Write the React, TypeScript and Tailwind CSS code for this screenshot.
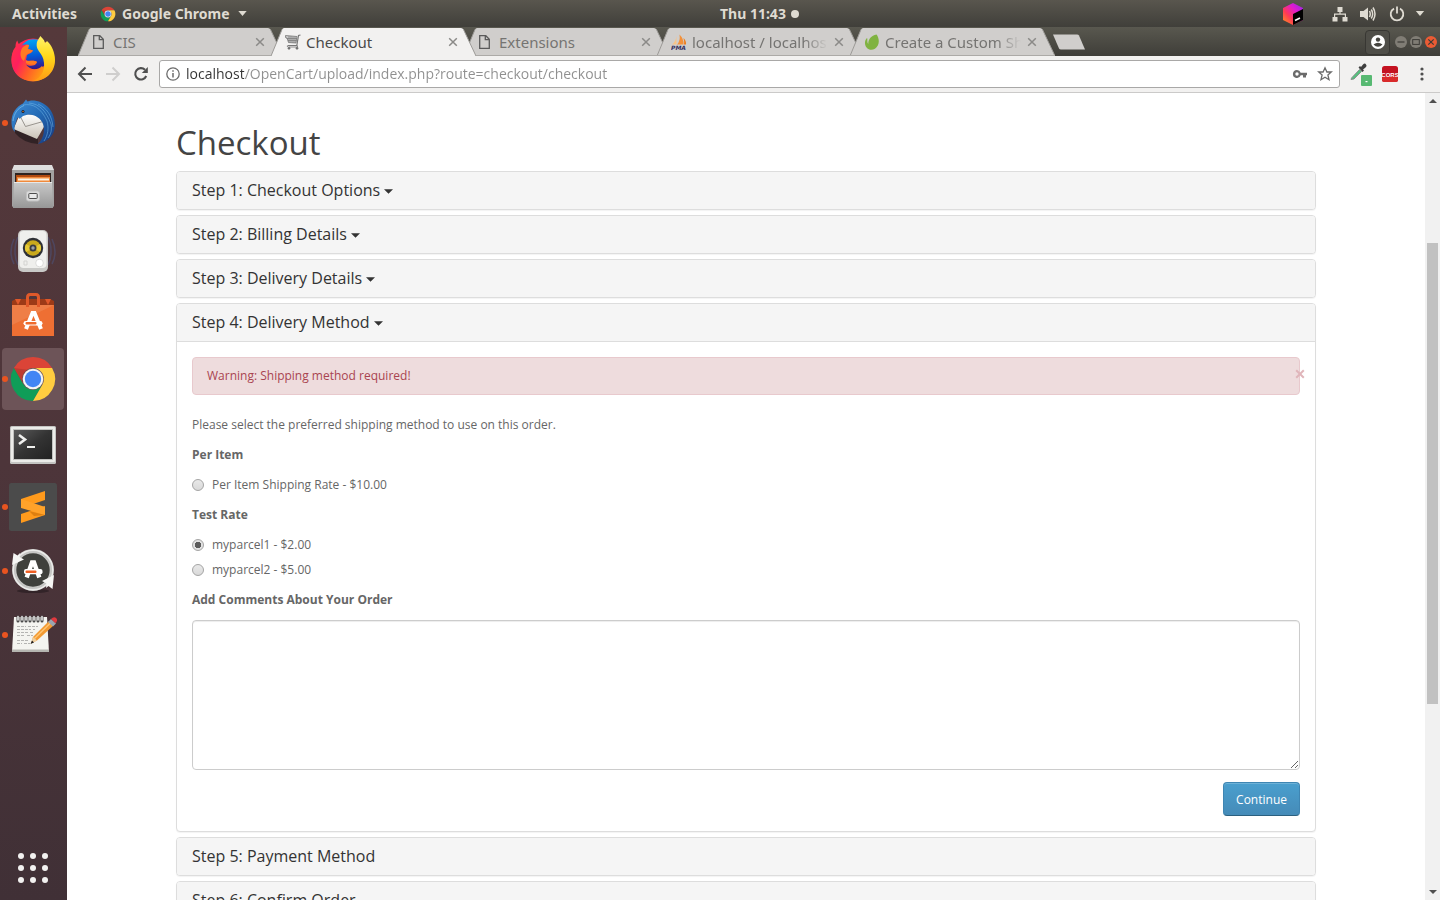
import React, { useState } from "react";

function ChromeLogo({ className }: { className: string }) {
  return (
    <svg viewBox="0 0 48 48" className={className} aria-hidden="true">
      <path d="M4.9 13A22 22 0 0 1 43.1 13H24A11 11 0 0 0 14.5 29.5Z" fill="#db4437" />
      <path d="M4.9 13L14.5 29.5A11 11 0 0 0 33.5 29.5L24 46A22 22 0 0 1 4.9 13Z" fill="#0f9d58" />
      <path d="M43.1 13H24A11 11 0 0 1 33.5 29.5L24 46A22 22 0 0 0 43.1 13Z" fill="#ffcd40" />
      <path d="M4.9 13L14.5 29.5L14 24L20 15Z" fill="#8c2f26" opacity=".35" />
      <circle cx="24" cy="24" r="10.3" fill="#f4f4f4" />
      <circle cx="24" cy="24" r="8.2" fill="#4285f4" />
    </svg>
  );
}

const icon = "size-12";

function Firefox() {
  return (
    <svg viewBox="0 0 48 48" className={icon} aria-hidden="true">
      <defs>
        <linearGradient id="ffBody" x1="0" y1="0.2" x2="1" y2="0.8">
          <stop offset="0" stopColor="#ff2f4a" />
          <stop offset=".3" stopColor="#ff1f5e" />
          <stop offset=".6" stopColor="#ff5a2a" />
          <stop offset="1" stopColor="#ffa210" />
        </linearGradient>
        <linearGradient id="ffFlame" x1="0" y1="0" x2="0" y2="1">
          <stop offset="0" stopColor="#fff36b" />
          <stop offset=".45" stopColor="#ffd91a" />
          <stop offset="1" stopColor="#ff9a14" />
        </linearGradient>
        <linearGradient id="ffGlobe" x1=".4" y1="0" x2=".5" y2="1">
          <stop offset="0" stopColor="#00a4f5" />
          <stop offset=".55" stopColor="#0459d6" />
          <stop offset="1" stopColor="#3a1282" />
        </linearGradient>
      </defs>
      <circle cx="24" cy="25" r="21.5" fill="url(#ffBody)" />
      <circle cx="25" cy="19.5" r="15.2" fill="url(#ffGlobe)" />
      <path d="M8.3 5.5C9 8 10 10 12 11C15 9 18 9.2 20 10L19 14L24 15.500C23 18 20 18.500 18 20L17 25C21 27 24 24.500 28 27C27 31 21 32 17 29.500C21 35 28 36 33 31C39 37 34 43 24 46C10 46 2 36 2.500 24C3 18 4 15 6.500 12C6.500 9 7 7 8.300 5.500Z" fill="url(#ffBody)" />
      <path d="M14 12C17 9.500 19 9.500 20 10.200L19 14L24 15.500C22 18.500 19 18 17 20.500L15 26C10 23 11 15 14 12ZM17 25.500C21 27 24 24.500 28 27C26 30 20 30 17 28Z" fill="#ff7a22" />
      <path d="M31.300 1C33 3 35.500 4.500 36 8C37 7 38 6 38 6C43 10 46 18 46 25C46 38 36 46 24 46C33 43 37 34 34.300 24C32 17 27 15 27.700 9C28 5 30 4 31.300 1Z" fill="url(#ffFlame)" />
    </svg>
  );
}

function Thunderbird() {
  return (
    <svg viewBox="0 0 48 48" className={icon} aria-hidden="true">
      <defs>
        <linearGradient id="tbWing" x1="0" y1="0" x2="1" y2="1">
          <stop offset="0" stopColor="#3f8fd8" />
          <stop offset=".5" stopColor="#2369b4" />
          <stop offset="1" stopColor="#16357a" />
        </linearGradient>
        <linearGradient id="tbMail" x1="0" y1="0" x2="0" y2="1">
          <stop offset="0" stopColor="#ffffff" />
          <stop offset="1" stopColor="#c9c2b6" />
        </linearGradient>
      </defs>
      <path d="M6 30L29 39L29 45Q14 44 6 34Z" fill="#1b1418" opacity=".6" />
      <path d="M11 15L33 16L36 26L28 40L4.500 30Z" fill="url(#tbMail)" />
      <path d="M11 17L16.500 27.500L34 22.500" stroke="#8f8a84" strokeWidth=".9" fill="none" />
      <path d="M2.500 24C2 14 8 7 14 4.500L17 .5L18.500 2.500L22 1.500C36 1 46 12 46 26C46 36 39 43 29 45C35 39 36 31 34 25C32 19 25 15 19 15.500L14 17L10.500 20C9.500 17 8 19 7 23C5.500 27 5 29 6 33C3.500 31 2.700 28 2.500 24Z" fill="url(#tbWing)" />
      <path d="M14 6C24 4 32 9 38 22M20 4C31 5 37 12 42 25M29 5C38 9 43 17 44 28M38 22C40 29 39 36 35 42M42 25C43 31 42 35 39 39" stroke="#6fb6e6" strokeWidth=".9" fill="none" opacity=".6" />
      <path d="M4 22C5 14 9 9 15 6.500" stroke="#7cc0ea" strokeWidth="1" fill="none" opacity=".7" />
      <circle cx="14" cy="12.500" r="1.500" fill="#101c30" />
      <circle cx="14" cy="12.500" r=".7" fill="#e8802a" />
    </svg>
  );
}

function Files() {
  return (
    <svg viewBox="0 0 48 48" className={icon} aria-hidden="true">
      <defs>
        <linearGradient id="fiFront" x1="0" y1="0" x2="0" y2="1">
          <stop offset="0" stopColor="#c9c9c9" />
          <stop offset="1" stopColor="#979797" />
        </linearGradient>
      </defs>
      <rect x="3" y="6" width="42" height="38" rx="1.500" fill="#a2a2a2" />
      <path d="M5 2H43L45 7H3Z" fill="#dedede" />
      <rect x="6" y="10" width="36" height="10" fill="#2e2320" />
      <rect x="7" y="12" width="34" height="8" fill="#b04a10" />
      <rect x="8" y="14" width="33" height="6" fill="#f08a3c" />
      <rect x="9" y="15.500" width="31" height="2" fill="#fdf4e3" />
      <path d="M5 19H43L44 45H4Z" fill="url(#fiFront)" />
      <path d="M5 19.500H43" stroke="#e8e8e8" />
      <rect x="17.500" y="28" width="13" height="10" rx="2" fill="#dcdcdc" stroke="#c2c2c2" />
      <rect x="19.800" y="30.500" width="8.400" height="5" rx=".6" fill="#e9e9e9" stroke="#4c4c4c" />
    </svg>
  );
}

function Rhythmbox() {
  return (
    <svg viewBox="0 0 48 48" className={icon} aria-hidden="true">
      <path d="M5 12C1 20 1 30 5 37M9 10C5 18 5 30 9 38M43 12C47 20 47 30 43 37M39 10C43 18 43 30 39 38" stroke="#4b5582" strokeWidth="1.600" fill="none" opacity=".5" />
      <rect x="9" y="3" width="30" height="42" rx="5" fill="#c9c9c7" />
      <rect x="10.500" y="4" width="27" height="37" rx="4" fill="#efefed" />
      <circle cx="24" cy="21" r="10.200" fill="#2f3136" />
      <circle cx="24" cy="21" r="7.800" fill="#c9a91c" />
      <path d="M24 21L17 17A8 8 0 0 0 17 25ZM24 21L31 17A8 8 0 0 1 31 25Z" fill="#e6c936" />
      <circle cx="24" cy="21" r="3.500" fill="#3a3c40" />
      <circle cx="24" cy="21" r="1.700" fill="#9aa0a8" />
      <circle cx="30.500" cy="36" r="3.800" fill="#fff" stroke="#d0d0ce" strokeWidth=".7" />
      <path d="M15 34H18V38H15Z" stroke="#d3d3d1" fill="none" />
    </svg>
  );
}

function Software() {
  return (
    <svg viewBox="0 0 48 48" className={icon} aria-hidden="true">
      <path d="M3 10L7 8H41L45 10V16H3Z" fill="#9d3a17" />
      <path d="M6 8L9 14L12 8ZM36 8L39 14L42 8Z" fill="#e0582a" />
      <rect x="3" y="14" width="42" height="31" fill="#ee6f33" />
      <path d="M3 14H45L3 34Z" fill="#f08550" opacity=".7" />
      <path d="M18.500 16V6.500Q18.500 3.500 21 3.500H27Q29.500 3.500 29.500 6.500V16" stroke="#e0592a" strokeWidth="3" fill="none" />
      <path d="M17 38L23.500 22H25.500L32 38" stroke="#fff" strokeWidth="4" fill="none" />
      <rect x="14.500" y="30" width="19" height="4.600" rx="2.300" fill="#fff" />
      <rect x="16.500" y="31" width="11" height="2.500" rx="1" fill="#ef6a2c" />
    </svg>
  );
}

function Terminal() {
  return (
    <svg viewBox="0 0 48 48" className={icon} aria-hidden="true">
      <defs>
        <linearGradient id="teScreen" x1="0" y1="0" x2="1" y2="1">
          <stop offset="0" stopColor="#5a5a5a" />
          <stop offset=".5" stopColor="#333333" />
          <stop offset="1" stopColor="#222222" />
        </linearGradient>
      </defs>
      <rect x="1" y="7" width="46" height="38" rx="1.500" fill="#c4c4c2" />
      <rect x="2" y="8" width="44" height="35" rx="1" fill="#ecece9" />
      <rect x="4" y="10" width="40" height="31" fill="#c2c2c0" />
      <rect x="5" y="11" width="38" height="29" fill="url(#teScreen)" />
      <path d="M10 16L16 20.500L10 25" stroke="#f0f0ee" strokeWidth="2.600" fill="none" />
      <rect x="18" y="27" width="8" height="2" fill="#f0f0ee" />
    </svg>
  );
}

function Sublime() {
  return (
    <svg viewBox="0 0 48 48" className={icon} aria-hidden="true">
      <rect width="48" height="48" rx="2.500" fill="#4b4b4b" />
      <path d="M12 31L36 23V32L12 40Z" fill="#ff9a1c" />
      <path d="M12 16L36 8V17L12 25Z" fill="#ff9a1c" />
      <path d="M12 16V25L36 32V24L24 20Z" fill="#ffa22a" />
      <path d="M20 28L36 32L25 33Z" fill="#dd7f10" />
    </svg>
  );
}

function Updater() {
  return (
    <svg viewBox="0 0 48 48" className={icon} aria-hidden="true">
      <ellipse cx="24" cy="44" rx="16" ry="2" fill="#1c1418" opacity=".5" />
      <circle cx="24" cy="23" r="17.500" fill="#3f403c" />
      <circle cx="24" cy="23" r="18.800" fill="none" stroke="#c6c6c4" strokeWidth="4.200" />
      <circle cx="24" cy="23" r="19.800" fill="none" stroke="#ececea" strokeWidth="1.400" />
      <path d="M3 18L4.500 6L8.500 8.500L11 6L10.500 10L15 12.500Z" fill="#f6f6f4" />
      <path d="M45 28L43.500 42L39.500 39L37 41L37.500 36.500L33 34Z" fill="#f6f6f4" />
      <path d="M17.700 30.500L23 15.500H25L30.300 30.500" stroke="#fff" strokeWidth="4.400" fill="none" />
      <rect x="15" y="22" width="18.500" height="5.200" rx="2" fill="#fff" />
      <rect x="16.500" y="23.400" width="11" height="2.500" rx="1" fill="#ef5f24" />
    </svg>
  );
}

function Notes() {
  return (
    <svg viewBox="0 0 48 48" className={icon} aria-hidden="true">
      <path d="M5 6H38L40 41H3Z" fill="#f4f4f0" />
      <path d="M3 38.500H40V41H3Z" fill="#b5b5b0" />
      <path d="M9 6V10M13 6V10M17 6V10M21 6V10M25 6V10M29 6V10M33 6V10" stroke="#4a4a4a" strokeWidth="3" strokeLinecap="round" />
      <path d="M9 5.500V9M13 5.500V9M17 5.500V9M21 5.500V9M25 5.500V9M29 5.500V9M33 5.500V9" stroke="#efefef" strokeWidth="1.500" strokeLinecap="round" />
      <path d="M8 15.500H17M19 15.500H29M8 18.500H22M24 18.500H26M8 21.500H19M21 21.500H25M8 24.500H15M18 24.500H24M8 29.500H19M8 32.500H13M15 32.500H21" stroke="#b4b4b2" strokeWidth="1" strokeDasharray="3 1" />
      <path d="M22 32.500L24 26L40 10L44.500 14.500L28 29.500Z" fill="#f39a32" />
      <path d="M25.500 27.500L41.500 12" stroke="#ffc675" strokeWidth="1.400" />
      <path d="M22 32.500L24 26L28 29.500Z" fill="#eecfa0" />
      <path d="M21.500 33L23 29.500L25 31.500Z" fill="#1f1f1f" />
      <path d="M39 11L42 8L47 12.500L44 15.500Z" fill="#9aa5b0" />
      <path d="M42 8Q45 5 47.500 7.500Q49 9.500 46.500 12.200Z" fill="#e0393e" />
    </svg>
  );
}

const dock = [
  { name: "Firefox", Icon: Firefox, running: false },
  { name: "Thunderbird", Icon: Thunderbird, running: true },
  { name: "Files", Icon: Files, running: false },
  { name: "Rhythmbox", Icon: Rhythmbox, running: false },
  { name: "Ubuntu Software", Icon: Software, running: false },
  { name: "Google Chrome", Icon: () => <ChromeLogo className={icon} />, running: true, active: true },
  { name: "Terminal", Icon: Terminal, running: false },
  { name: "Sublime Text", Icon: Sublime, running: true },
  { name: "Software Updater", Icon: Updater, running: true },
  { name: "Text Editor", Icon: Notes, running: true },
];

function Dock() {
  return (
    <nav aria-label="Dock" className="flex w-[67px] shrink-0 flex-col justify-between bg-linear-to-b from-[#55393b] via-[#4d353a] to-[#403036]">
      <ul>
        {dock.map(({ name, Icon, running, active }) => (
          <li key={name} className="relative flex h-16 items-center justify-center pr-px">
            {running && <span className="absolute left-[2px] z-10 size-[6px] rounded-full bg-[#e95420]" />}
            <button
              type="button"
              aria-label={name}
              className={`flex size-[62px] items-center justify-center rounded ${active ? "bg-[#6d5458]" : ""}`}
            >
              <Icon />
            </button>
          </li>
        ))}
      </ul>
      <button type="button" aria-label="Show Applications" className="flex h-16 items-center justify-center pr-px">
        <span className="grid grid-cols-3 gap-[6px]">
          {Array.from({ length: 9 }, (_, i) => (
            <span key={i} className="size-[6px] rounded-full bg-[#f2f1f0]" />
          ))}
        </span>
      </button>
    </nav>
  );
}

function TopBar() {
  return (
    <header className="grid h-[27px] shrink-0 grid-cols-2 items-center bg-linear-to-b from-[#59564e] to-[#403f3a] text-sm font-bold text-[#dfdbd2]">
      <div className="flex items-center pl-3">
        <button type="button">Activities</button>
        <button type="button" className="ml-[23px] flex items-center">
          <ChromeLogo className="mr-[6px] size-4" />
          Google Chrome
          <svg viewBox="0 0 10 6" className="ml-2 h-[5px] w-[9px]" aria-hidden="true">
            <path d="M0 0H10L5 6Z" fill="currentColor" />
          </svg>
        </button>
      </div>
      <div className="flex items-center justify-between pr-[15px]">
        <button type="button" className="flex items-center gap-[5px]">
          Thu 11:43
          <span className="size-2 rounded-full bg-[#dfdbd2]" />
        </button>
        <div className="flex items-center">
          <svg viewBox="0 0 20 22" className="mr-[29px] h-[22px] w-5" aria-label="JetBrains Toolbox">
            <defs>
              <linearGradient id="jb" x1="0" y1="1" x2="1" y2="0">
                <stop offset="0" stopColor="#ff9a1a" />
                <stop offset=".35" stopColor="#ff3a55" />
                <stop offset=".65" stopColor="#e01ad0" />
                <stop offset="1" stopColor="#8a2be8" />
              </linearGradient>
            </defs>
            <path d="M10 0L20 5V17L10 22L0 17V5Z" fill="url(#jb)" />
            <path d="M10 11L20 6V17L10 22Z" fill="#000" />
            <path d="M12 17.500L17 15" stroke="#fff" strokeWidth="1.600" />
          </svg>
          <svg viewBox="0 0 16 16" className="mr-3 size-4" fill="currentColor" aria-label="Network">
            <path d="M5.500 1H10.500V6H8.600V7.500H14V11H15.500V15.500H10.500V11H12.800V8.700H3.200V11H5.500V15.500H.5V11H2V7.500H7.400V6H5.500Z" />
          </svg>
          <svg viewBox="0 0 16 16" className="mr-[13px] size-4" aria-label="Volume">
            <path d="M0 5H3.500L8 1.500V14.500L3.500 11H0Z" fill="currentColor" />
            <path d="M9.500 5Q11 8 9.500 11M11.300 3.500Q14 8 11.300 12.500M13 1.500Q17 8 13 14.500" stroke="currentColor" strokeWidth="1.500" fill="none" />
          </svg>
          <svg viewBox="0 0 16 16" className="mr-[10px] size-4" fill="none" stroke="currentColor" strokeWidth="1.800" aria-label="Power">
            <path d="M5 2.600A6.300 6.300 0 1 0 11 2.600M8 .5V7.500" />
          </svg>
          <svg viewBox="0 0 10 6" className="h-[5px] w-[10px]" aria-hidden="true">
            <path d="M0 0H10L5 6Z" fill="currentColor" />
          </svg>
        </div>
      </div>
    </header>
  );
}

function PageIcon() {
  return (
    <svg viewBox="0 0 16 16" className="size-4 shrink-0" aria-hidden="true">
      <path d="M1.700 1.700H7.800L11.300 5.200V14.300H1.700ZM7.300 1.700V5.700H11.300" fill="none" stroke="#5a5a5a" strokeWidth="1.300" />
    </svg>
  );
}

function CartIcon() {
  return (
    <svg viewBox="0 0 16 16" className="size-4 shrink-0" fill="none" stroke="#777" aria-hidden="true">
      <path d="M.5 1.500L12 2.500L11 9L3.500 8.500L2 4L.5 3.500Z" fill="#c9c9c9" strokeWidth=".8" />
      <path d="M4 2V8.500M6 2V8.500M8 2.500V9M10 2.500V9M1.500 4.500H12M3 6.500H11.500" strokeWidth=".7" />
      <path d="M15.500 1L13.500 1.500L11.800 11.500H3.500L2 12.500" strokeWidth="1.200" />
      <path d="M12.500 11.500V13H4" strokeWidth=".8" />
      <circle cx="4" cy="14.200" r="1" fill="#555" />
      <circle cx="12" cy="14.200" r="1" fill="#555" />
    </svg>
  );
}

function PmaIcon() {
  return (
    <svg viewBox="0 0 16 16" className="size-4 shrink-0" aria-hidden="true">
      <path d="M5.500 2V10.500H1Q4.500 8 5.500 2Z" fill="#f8c488" />
      <path d="M8.500 .5Q13 5 12.500 10.500H6Q9.500 7 8.500 .5Z" fill="#f3913a" />
      <path d="M12.500 4Q15.500 7 15 10.500H13Q13.500 8 12.500 4Z" fill="#ee7d1c" />
      <text x="0" y="15.500" fontSize="6" fontWeight="bold" fontStyle="italic" fill="#33305f" fontFamily="DejaVu Sans, sans-serif">PMA</text>
    </svg>
  );
}

function EnvatoIcon() {
  return (
    <svg viewBox="0 0 16 16" className="size-4 shrink-0" aria-hidden="true">
      <path d="M12.500 .6C14.500 3 15.800 7.500 13.800 11.500C11.500 16 6 17.300 2.800 13.800C.3 11 .5 7 2.500 4.500C3 4 3.500 4.300 3.400 5C3.200 7 3.300 9 4.300 10C4 6 7 1.500 12.500 .6Z" fill="#80b341" />
    </svg>
  );
}

const tabs = [
  { title: "CIS", Icon: PageIcon },
  { title: "Checkout", Icon: CartIcon, active: true },
  { title: "Extensions", Icon: PageIcon },
  { title: "localhost / localhos", Icon: PmaIcon, faded: true },
  { title: "Create a Custom Shi", Icon: EnvatoIcon, faded: true },
];

function TabStrip() {
  return (
    <div className="flex h-[29px] shrink-0 justify-between bg-linear-to-b from-[#59584f] to-[#3f3e39] pt-px">
      <div className="flex min-w-0 pl-[11px]" role="tablist">
        {tabs.map(({ title, Icon, active, faded }) => (
          <div
            key={title}
            role="tab"
            aria-selected={!!active}
            className={`relative -mr-3 flex h-7 w-[205px] items-center pr-[18px] pl-[14px] ${active ? "z-10" : ""}`}
          >
            <svg viewBox="0 0 205 28" preserveAspectRatio="none" className="absolute inset-0 size-full" aria-hidden="true">
              <path d="M0 28L11 1.500Q11.800 0 13 0H190Q191.500 0 192.500 1.500L205 28Z" fill={active ? "#f2f1f0" : "#d0cecc"} />
              <path d="M0 28L11 1.500M192.500 1.500L205 28" stroke="#9c9a97" strokeWidth="1" />
              {!active && <path d="M0 27.500H205" stroke="#acaaa7" />}
            </svg>
            <span className="relative flex min-w-0 flex-1 items-center gap-[5px]">
              <Icon />
              <span
                className={`min-w-0 flex-1 text-[15px] leading-5 whitespace-nowrap ${active ? "text-[#4a4a4a]" : "text-[#757472]"} ${
                  faded ? "[mask-image:linear-gradient(to_right,black_82%,transparent_100%)]" : ""
                }`}
              >
                {title}
              </span>
            </span>
            <button type="button" aria-label={`Close ${title}`} className="relative ml-[6px]">
              <svg viewBox="0 0 10 10" className="size-[10px]" aria-hidden="true">
                <path d="M1.200 1.200L8.800 8.800M8.800 1.200L1.200 8.800" stroke="#8b8a88" strokeWidth="1.500" />
              </svg>
            </button>
          </div>
        ))}
        <button type="button" aria-label="New tab" className="ml-[9px] self-center">
          <svg viewBox="0 0 34 16" className="h-4 w-[34px]" aria-hidden="true">
            <path d="M1 .5H25Q26.500 .5 27 1.500L33 15.500H9Q7.500 15.500 7 14.500Z" fill="#d0cecc" />
          </svg>
        </button>
      </div>
      <div className="flex items-center gap-[3px] pr-[3px]">
        <button type="button" aria-label="Profile" className="mr-[2px] flex size-[25px] items-center justify-center rounded border border-[#383733] bg-[#4f4e48]">
          <svg viewBox="0 0 14 14" className="size-[14px]" aria-hidden="true">
            <circle cx="7" cy="7" r="7" fill="#fff" />
            <circle cx="7" cy="4.600" r="2.200" fill="#45443f" />
            <path d="M2.500 9.500Q7 5.800 11.500 9.500Q7 14 2.500 9.500Z" fill="#45443f" />
          </svg>
        </button>
        <button type="button" aria-label="Minimize">
          <svg viewBox="0 0 12 12" className="size-3" aria-hidden="true">
            <circle cx="6" cy="6" r="6" fill="#807d75" />
            <path d="M2.500 6H9.500" stroke="#3c3b37" strokeWidth="1.200" />
          </svg>
        </button>
        <button type="button" aria-label="Maximize">
          <svg viewBox="0 0 12 12" className="size-3" aria-hidden="true">
            <circle cx="6" cy="6" r="6" fill="#807d75" />
            <rect x="2.700" y="3.600" width="6.600" height="4.800" fill="none" stroke="#3c3b37" />
          </svg>
        </button>
        <button type="button" aria-label="Close window">
          <svg viewBox="0 0 12 12" className="size-3" aria-hidden="true">
            <circle cx="6" cy="6" r="6" fill="#ea5b34" />
            <path d="M3.300 3.300L8.700 8.700M8.700 3.300L3.300 8.700" stroke="#3c3b37" strokeWidth="1.200" />
          </svg>
        </button>
      </div>
    </div>
  );
}

function Toolbar() {
  return (
    <div className="flex h-[37px] shrink-0 items-center border-b border-[#cbcac9] bg-[#f2f1f0] pr-[10px] pl-[10px] text-[#4f4f4f]">
      <button type="button" aria-label="Back">
        <svg viewBox="0 0 16 16" className="size-4" fill="none" stroke="currentColor" strokeWidth="2" aria-hidden="true">
          <path d="M15 8H2.500M8.500 1.500L2 8L8.500 14.500" />
        </svg>
      </button>
      <button type="button" aria-label="Forward" className="ml-3 text-[#cfcecd]">
        <svg viewBox="0 0 16 16" className="size-4" fill="none" stroke="currentColor" strokeWidth="2" aria-hidden="true">
          <path d="M1 8H13.500M7.500 1.500L14 8L7.500 14.500" />
        </svg>
      </button>
      <button type="button" aria-label="Reload" className="ml-3">
        <svg viewBox="0 0 16 16" className="size-4" aria-hidden="true">
          <path d="M13.200 10A5.700 5.700 0 1 1 12 3.800" fill="none" stroke="currentColor" strokeWidth="2.100" />
          <path d="M14.800 1V7H8.800Z" fill="currentColor" />
        </svg>
      </button>
      <div className="ml-[10px] flex h-7 min-w-0 flex-1 items-center rounded-[3px] border border-[#a9a8a7] bg-white px-[6px]">
        <svg viewBox="0 0 14 14" className="size-[14px] shrink-0" fill="none" stroke="#6b6b6b" aria-hidden="true">
          <circle cx="7" cy="7" r="6.200" strokeWidth="1.300" />
          <path d="M7 6V10.500M7 3.200V4.800" strokeWidth="1.500" />
        </svg>
        <input
          type="text"
          aria-label="Address"
          defaultValue="localhost/OpenCart/upload/index.php?route=checkout/checkout"
          className="ml-[6px] min-w-0 flex-1 bg-[linear-gradient(to_right,#333_58px,#8f8f8f_58px)] bg-clip-text font-['Open_Sans',sans-serif] text-sm text-transparent outline-none"
        />
        <svg viewBox="0 0 16 16" className="size-4 shrink-0" aria-label="Saved passwords">
          <path d="M5 4A4 4 0 1 0 8.700 9.300H11V11.500H14V9.300H15V6.700H8.700A4 4 0 0 0 5 4ZM5 6.300A1.700 1.700 0 1 1 5 9.700A1.700 1.700 0 1 1 5 6.300Z" fill="#6b6b6b" fillRule="evenodd" />
        </svg>
        <svg viewBox="0 0 16 16" className="ml-[9px] size-4 shrink-0" aria-label="Bookmark">
          <path d="M8 1.800L9.900 6H14.300L10.900 9L12 13.700L8 11.200L4 13.700L5.100 9L1.700 6H6.100Z" fill="none" stroke="#6b6b6b" strokeWidth="1.300" />
        </svg>
      </div>
      <button type="button" aria-label="Color picker" className="ml-[10px]">
        <svg viewBox="0 0 23 24" className="h-6 w-[23px]" aria-hidden="true">
          <path d="M1.500 16L9.500 7.500L11.500 9.500L4 17L1 17.500Z" fill="#55c07e" stroke="#8a8a8a" strokeWidth=".9" />
          <path d="M8.500 5.500L10 4L11 5L13 2.500Q15 .5 16 2.500Q17.500 4 15.500 5.500L13 7.500L14 8.500L12.500 10Z" fill="#3f3f3f" />
          <rect x="11" y="13" width="11" height="11" rx="1" fill="#57b972" />
          <rect x="15.500" y="19" width="2" height="1.200" fill="#fff" />
        </svg>
      </button>
      <button type="button" aria-label="CORS" className="ml-[9px]">
        <svg viewBox="0 0 16 16" className="size-4" aria-hidden="true">
          <rect width="16" height="16" rx="2.500" fill="#c41220" />
          <rect y="10" width="16" height="6" rx="2.500" fill="#d92a2a" />
          <text x="8" y="10.500" textAnchor="middle" fontSize="6" fontWeight="bold" fill="#fff" fontFamily="Liberation Sans Narrow, Liberation Sans, sans-serif">CORS</text>
        </svg>
      </button>
      <button type="button" aria-label="Menu" className="ml-4">
        <svg viewBox="0 0 16 16" className="size-4" fill="currentColor" aria-hidden="true">
          <circle cx="8" cy="3" r="1.600" />
          <circle cx="8" cy="8" r="1.600" />
          <circle cx="8" cy="13" r="1.600" />
        </svg>
      </button>
    </div>
  );
}

function Step({ title, caret, children }: { title: string; caret?: boolean; children?: React.ReactNode }) {
  return (
    <section className="overflow-hidden rounded border border-[#ddd] bg-white shadow-[0_1px_1px_rgba(0,0,0,0.05)]">
      <h2 className="bg-[#f5f5f5] px-[15px] py-[10px] text-base leading-[17px] text-[#333]">
        {caret ? (
          <a href="#step" className="inline-flex items-center gap-1">
            {title}
            <svg viewBox="0 0 10 5" className="mt-px h-[5px] w-[9px]" aria-hidden="true">
              <path d="M0 0H10L5 5Z" fill="currentColor" />
            </svg>
          </a>
        ) : (
          title
        )}
      </h2>
      {children && <div className="border-t border-[#ddd] p-[15px]">{children}</div>}
    </section>
  );
}

function Rate({ value, label, selected, onSelect }: { value: string; label: string; selected: string; onSelect: (v: string) => void }) {
  return (
    <label className="flex w-fit items-center gap-2">
      <input
        type="radio"
        name="shipping"
        value={value}
        checked={selected === value}
        onChange={() => onSelect(value)}
        className="size-3 appearance-none rounded-full border border-[#a4a4a4] bg-linear-to-b from-[#e9e9e9] to-[#d9d9d9] checked:bg-[radial-gradient(circle,#5c5c5c_0,#5c5c5c_3px,#e2e2e2_3px)]"
      />
      {label}
    </label>
  );
}

function Checkout() {
  const [rate, setRate] = useState("myparcel1");
  return (
    <main className="min-w-0 flex-1 overflow-hidden bg-white px-[15px] pt-8 font-['Open_Sans',sans-serif] text-xs leading-5 text-[#666]">
      <div className="mx-auto max-w-[1140px]">
        <h1 className="mb-[10px] text-[33px] leading-9 text-[#444]">Checkout</h1>
        <div className="flex flex-col gap-[5px]">
          <Step title="Step 1: Checkout Options" caret />
          <Step title="Step 2: Billing Details" caret />
          <Step title="Step 3: Delivery Details" caret />
          <Step title="Step 4: Delivery Method" caret>
            <div role="alert" className="relative mb-5 rounded border border-[#e8c9cd] bg-[#eedcdd] px-[14px] py-2 text-[#a94450]">
              Warning: Shipping method required!
              <button type="button" aria-label="Dismiss" className="absolute top-[11px] -right-[6px]">
                <svg viewBox="0 0 10 10" className="size-[10px]" aria-hidden="true">
                  <path d="M1.200 1.200L8.800 8.800M8.800 1.200L1.200 8.800" stroke="#e0b5ba" strokeWidth="2" />
                </svg>
              </button>
            </div>
            <form className="flex flex-col" onSubmit={(e) => e.preventDefault()}>
              <p className="mb-[10px]">Please select the preferred shipping method to use on this order.</p>
              <p className="mb-[10px] font-bold">Per Item</p>
              <Rate value="item" label="Per Item Shipping Rate - $10.00" selected={rate} onSelect={setRate} />
              <p className="my-[10px] font-bold">Test Rate</p>
              <div className="flex flex-col gap-[5px]">
                <Rate value="myparcel1" label="myparcel1 - $2.00" selected={rate} onSelect={setRate} />
                <Rate value="myparcel2" label="myparcel2 - $5.00" selected={rate} onSelect={setRate} />
              </div>
              <label htmlFor="comments" className="my-[10px] font-bold">
                Add Comments About Your Order
              </label>
              <textarea
                id="comments"
                className="h-[150px] w-full rounded border border-[#ccc] px-3 py-2 shadow-[inset_0_1px_1px_rgba(0,0,0,0.075)] outline-none"
              />
              <button
                type="submit"
                className="mt-3 self-end rounded border border-[#3f86b3] border-b-[#2b607f] bg-linear-to-b from-[#4a9fce] to-[#458bb8] px-3 pt-[7px] pb-[5px] text-white shadow-[inset_0_1px_0_rgba(255,255,255,0.2)]"
              >
                Continue
              </button>
            </form>
          </Step>
          <Step title="Step 5: Payment Method" />
          <Step title="Step 6: Confirm Order" />
        </div>
      </div>
    </main>
  );
}

function Scrollbar() {
  return (
    <div className="flex w-[15px] shrink-0 flex-col items-center justify-between bg-[#f1f1f1] py-[6px]" aria-hidden="true">
      <svg viewBox="0 0 8 4" className="h-1 w-2">
        <path d="M0 4L4 0L8 4Z" fill="#505050" />
      </svg>
      <div className="flex min-h-0 w-[11px] flex-1 flex-col pt-[140px] pb-[186px]">
        <div className="flex-1 bg-[#c1c1c1]" />
      </div>
      <svg viewBox="0 0 8 4" className="h-1 w-2">
        <path d="M0 0L4 4L8 0Z" fill="#505050" />
      </svg>
    </div>
  );
}

export default function App() {
  return (
    <div className="flex h-screen flex-col overflow-hidden font-['Noto_Sans',sans-serif]">
      <TopBar />
      <div className="flex min-h-0 flex-1">
        <Dock />
        <div className="flex min-w-0 flex-1 flex-col">
          <TabStrip />
          <Toolbar />
          <div className="flex min-h-0 flex-1">
            <Checkout />
            <Scrollbar />
          </div>
        </div>
      </div>
    </div>
  );
}
